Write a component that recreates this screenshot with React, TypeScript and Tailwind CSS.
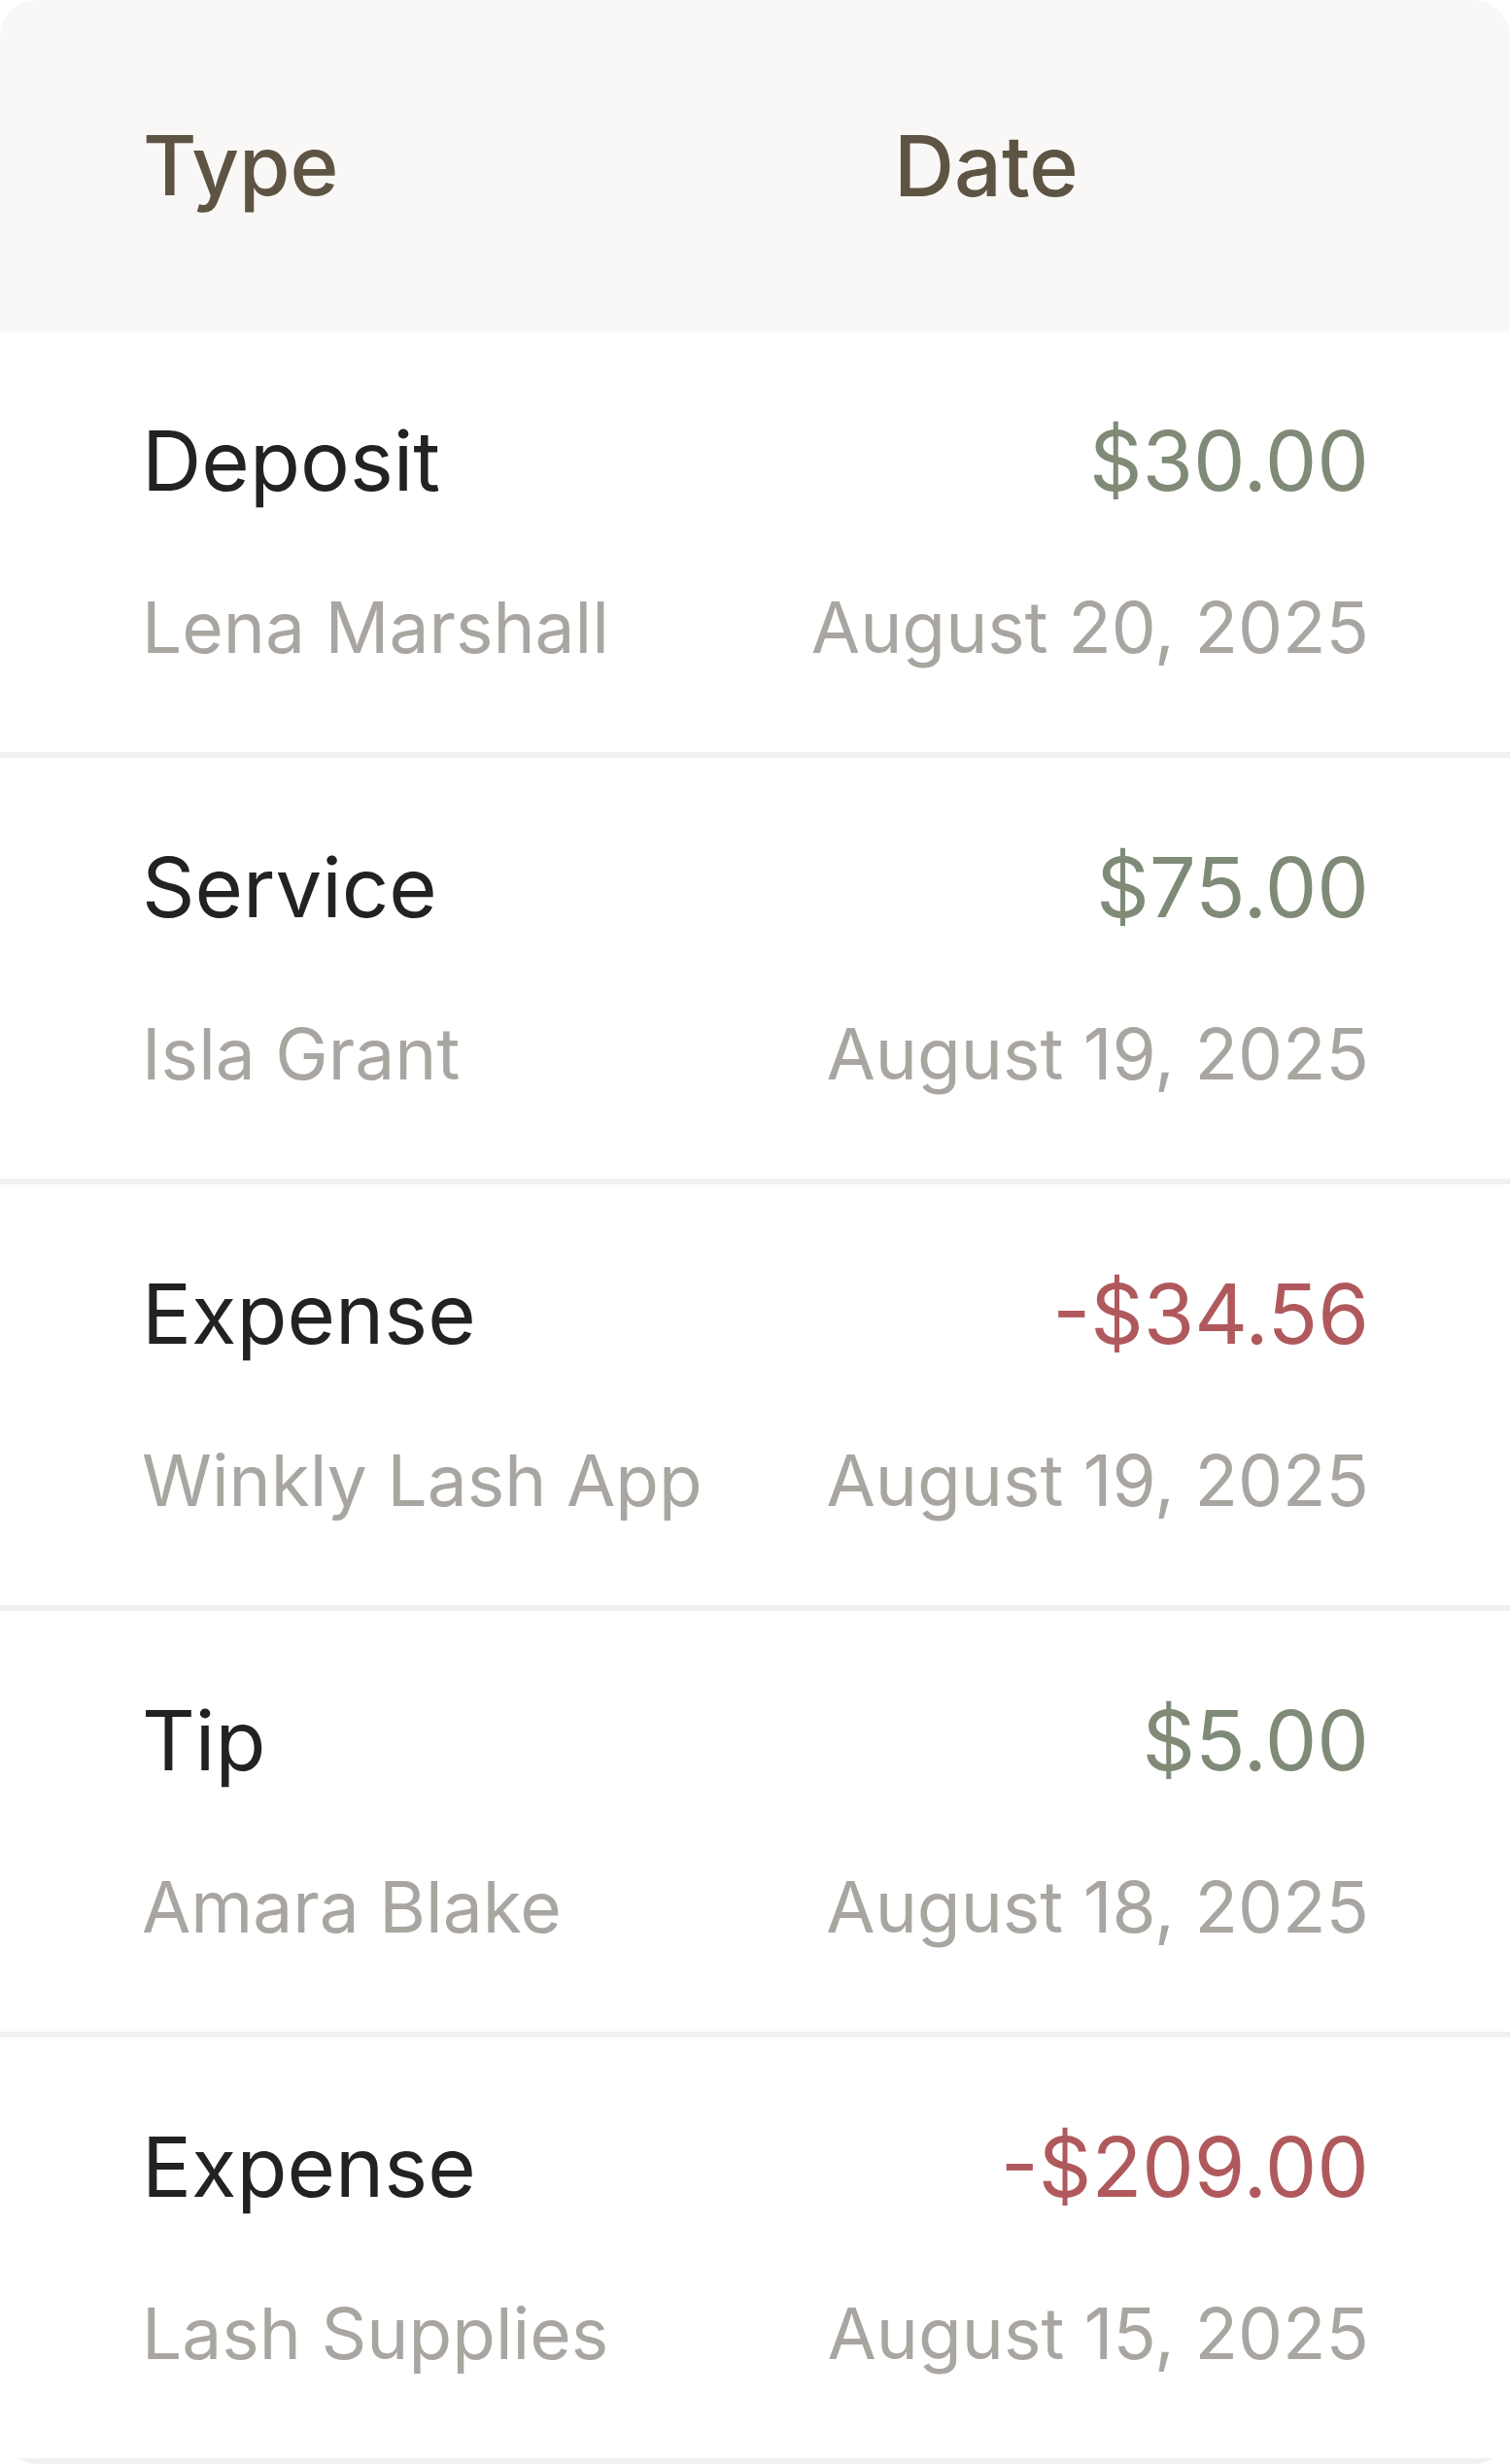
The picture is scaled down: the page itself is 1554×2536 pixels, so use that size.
import React from "react";

type Row = { type: string; name: string; amount: string; date: string; negative?: boolean };

const rows: Row[] = [
  { type: "Deposit", name: "Lena Marshall", amount: "$30.00", date: "August 20, 2025" },
  { type: "Service", name: "Isla Grant", amount: "$75.00", date: "August 19, 2025" },
  { type: "Expense", name: "Winkly Lash App", amount: "-$34.56", date: "August 19, 2025", negative: true },
  { type: "Tip", name: "Amara Blake", amount: "$5.00", date: "August 18, 2025" },
  { type: "Expense", name: "Lash Supplies", amount: "-$209.00", date: "August 15, 2025", negative: true },
];

export default function App() {
  return (
    <div className="w-[1554px] bg-white" style={{ fontFamily: "Inter, 'Noto Sans', sans-serif" }}>
      <div className="w-[1554px] h-[2536px] rounded-[38px] overflow-hidden bg-white">
        <div className="h-[341px] bg-[#f9f8f6] flex items-center pl-[147px] pr-[145px]">
          <div className="w-[773px] text-[85px] leading-[100px] font-medium text-[#5e5444]">Type</div>
          <div className="text-[86px] leading-[100px] font-medium text-[#5e5444]">Date</div>
        </div>
        {rows.map((r, i) => (
          <div key={i} className="border-b-[6px] border-[#f2f1f0] pl-[146px] pr-[145px] pt-[84px] pb-[84px] flex flex-col gap-[77px]">
            <div className="flex justify-between items-center h-[100px]">
              <span className="text-[85px] leading-[100px] text-[#222222]">{r.type}</span>
              <span className={r.negative ? "text-[85px] leading-[100px] text-[#b0595c]" : "text-[85px] leading-[100px] text-[#7f8b77]"}>
                {r.amount}
              </span>
            </div>
            <div className="flex justify-between items-center h-[88px]">
              <span className="text-[73px] leading-[88px] text-[#a9a5a1]">{r.name}</span>
              <span className="text-[73px] leading-[88px] text-[#a9a5a1]">{r.date}</span>
            </div>
          </div>
        ))}
      </div>
    </div>
  );
}
